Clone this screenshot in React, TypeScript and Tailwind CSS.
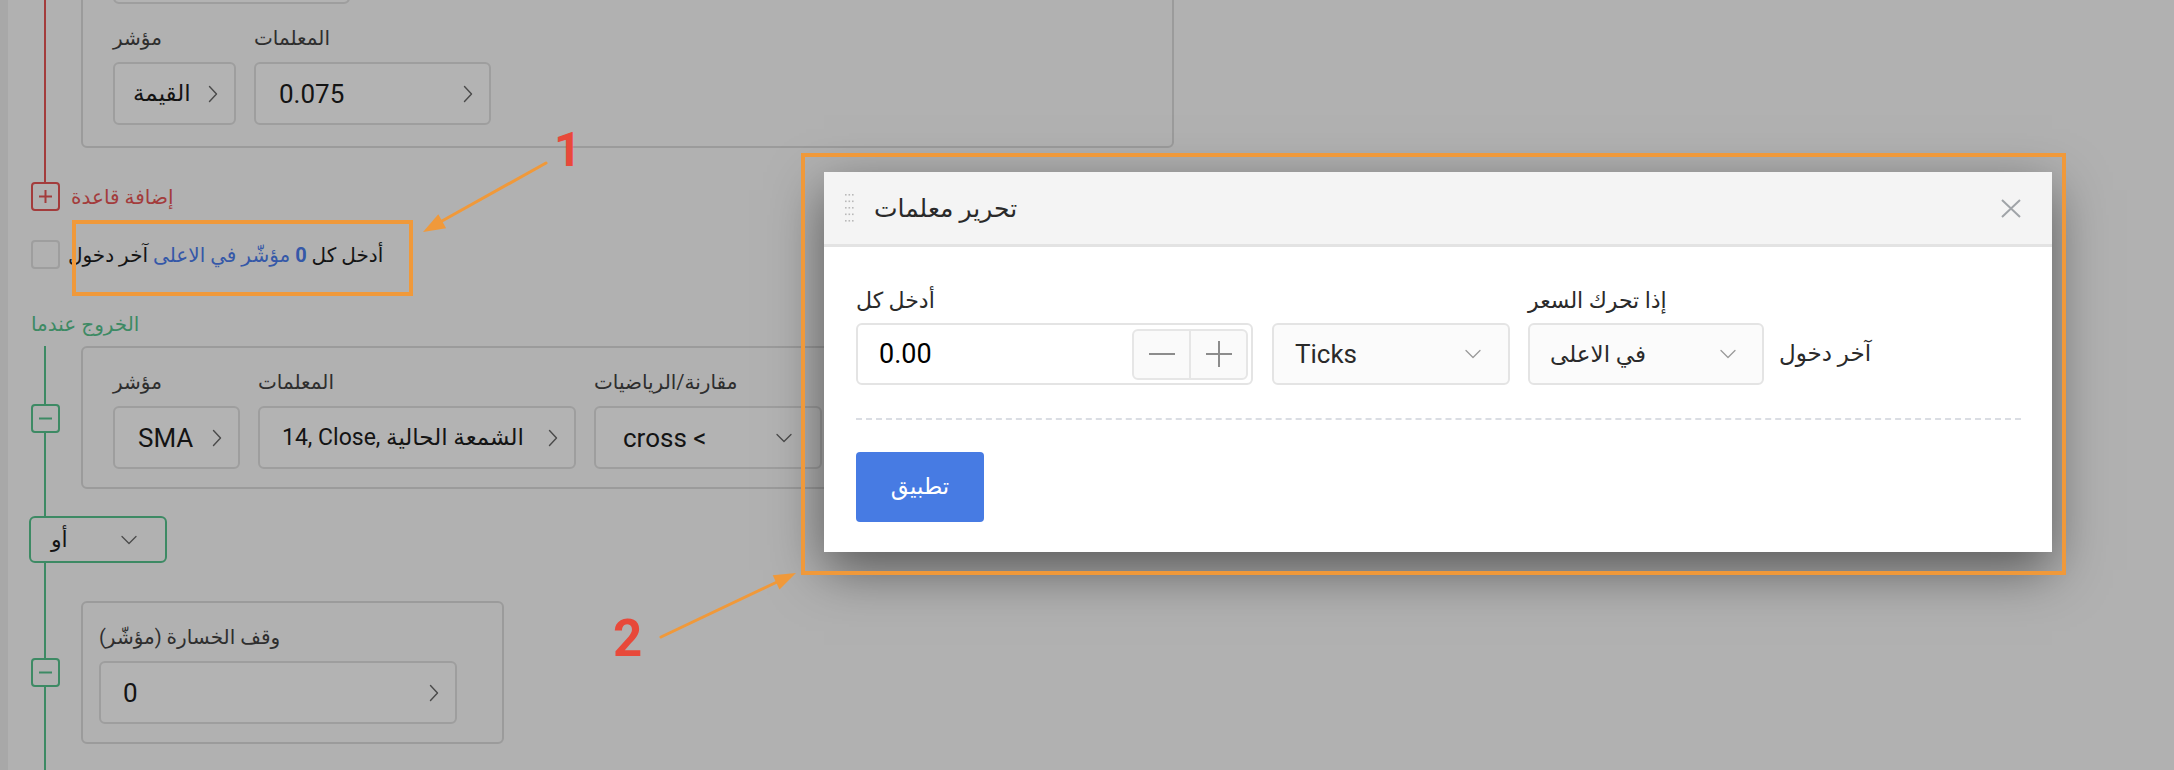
import React from 'react'

function ChevronRight() {
  return (
    <svg className="shrink-0" width="10" height="18" viewBox="0 0 10 18" fill="none" stroke="#4a4a4a" strokeWidth="1.4" strokeLinecap="round" strokeLinejoin="round">
      <path d="M1.5 1.5 L8.5 9 L1.5 16.5" />
    </svg>
  )
}

function ChevronDown({ color = '#9a9a9a' }: { color?: string }) {
  return (
    <svg className="shrink-0" width="16" height="10" viewBox="0 0 16 10" fill="none" stroke={color} strokeWidth="1.3" strokeLinecap="round" strokeLinejoin="round">
      <path d="M1 1.5 L8 8.5 L15 1.5" />
    </svg>
  )
}

function PageInput({ value, width, pl = 'pl-[23px]', size = 'text-[26px]' }: { value: string; width: string; pl?: string; size?: string }) {
  return (
    <div className={`flex h-[63px] items-center justify-between gap-[6px] rounded-[6px] border-2 border-[#9e9e9e] bg-[#b3b3b3] pr-[16px] ${pl} ${width}`}>
      <span className={`leading-none text-[#141414] whitespace-nowrap ${size}`}>{value}</span>
      <ChevronRight />
    </div>
  )
}

function Field({ label, children }: { label: string; children: React.ReactNode }) {
  return (
    <div className="flex flex-col">
      <div className="mb-[10px] h-[28px] text-[20px] leading-[28px] text-[#2e2e2e] whitespace-nowrap">{label}</div>
      {children}
    </div>
  )
}

function RuleBox({ sign, color }: { sign: 'plus' | 'minus'; color: string }) {
  const border = color === 'red' ? 'border-[#a33c3c]' : 'border-[#3d8a64]'
  const stroke = color === 'red' ? '#a33c3c' : '#3d8a64'
  return (
    <div className={`flex h-[29px] w-[29px] shrink-0 items-center justify-center rounded-[4px] border-2 bg-[#b1b1b1] ${border}`}>
      <svg width="15" height="15" viewBox="0 0 15 15" fill="none" stroke={stroke} strokeWidth="2">
        <path d="M1 7.5 H14" />
        {sign === 'plus' && <path d="M7.5 1 V14" />}
      </svg>
    </div>
  )
}

function DragDots() {
  const dots = []
  for (let r = 0; r < 5; r++) {
    for (let c = 0; c < 3; c++) {
      dots.push(<rect key={`${r}-${c}`} x={c * 3.5} y={r * 6.5} width="1.6" height="1.6" fill="#b9b9b9" />)
    }
  }
  return (
    <svg width="9" height="28" viewBox="0 0 9 28">
      {dots}
    </svg>
  )
}

export default function App() {
  return (
    <div className="relative h-[770px] w-[2174px] overflow-hidden bg-[#b1b1b1] font-[Roboto,'DejaVu_Sans',sans-serif] text-[#141414]">
      {/* page behind the overlay */}
      <div className="flex h-full">
        <div className="h-full w-[8px] shrink-0 bg-[#a8a8a8]" />
        <div className="-mt-[83px] flex-1 pl-[23px]">
          {/* entry rules */}
          <div className="ml-[13px] border-l-2 border-[#a33c3c] pb-[34px] pl-[35px]">
            <div className="w-[1093px] rounded-[6px] border-2 border-[#9b9b9b] pb-[21px] pl-[30px] pt-[22px]">
              <div className="h-[63px] w-[237px] rounded-[6px] border-2 border-[#9e9e9e] bg-[#b3b3b3]" />
              <div className="mt-[20px] flex gap-[18px]">
                <Field label="مؤشر">
                  <PageInput value="القيمة" width="w-[123px]" pl="pl-[18px]" size="text-[23px]" />
                </Field>
                <Field label="المعلمات">
                  <PageInput value="0.075" width="w-[237px]" />
                </Field>
              </div>
            </div>
          </div>

          <div className="flex items-center">
            <RuleBox sign="plus" color="red" />
            <span className="ml-[11px] text-[20px] leading-[28px] text-[#a33c3c]">إضافة قاعدة</span>
          </div>

          <div className="mt-[29px] flex items-center">
            <div className="h-[29px] w-[29px] shrink-0 rounded-[4px] border-2 border-[#9e9e9e]" />
            <span dir="rtl" className="ml-[8px] whitespace-nowrap text-[20px] leading-[28px]">
              <span className="text-[#141414]">أدخل كل </span>
              <span className="font-bold text-[#3558a8]">0</span>
              <span className="text-[#3558a8]"> مؤشّر في الاعلى</span>
              <span className="text-[#141414]"> آخر دخول</span>
            </span>
          </div>

          <div className="mt-[41px] text-[20px] leading-[28px] text-[#3d8a64]">الخروج عندما</div>

          {/* exit rules */}
          <div className="ml-[13px] mt-[8px] border-l-2 border-[#3d8a64] pb-[120px]">
            <div className="flex items-start">
              <div className="-ml-[15px] mt-[58px]">
                <RuleBox sign="minus" color="green" />
              </div>
              <div className="ml-[21px] w-[1093px] rounded-[6px] border-2 border-[#9b9b9b] pb-[18px] pl-[30px] pt-[20px]">
                <div className="flex gap-[18px]">
                  <Field label="مؤشر">
                    <PageInput value="SMA" width="w-[127px]" pl="pl-[23px]" />
                  </Field>
                  <Field label="المعلمات">
                    <PageInput value="14, Close, الشمعة الحالية" width="w-[318px]" pl="pl-[22px]" size="text-[23px]" />
                  </Field>
                  <Field label="مقارنة/الرياضيات">
                    <div className="flex h-[63px] w-[228px] items-center justify-between rounded-[6px] border-2 border-[#9e9e9e] bg-[#b3b3b3] pl-[27px] pr-[28px]">
                      <span className="text-[26px] leading-none text-[#141414]">cross &lt;</span>
                      <ChevronDown color="#4a4a4a" />
                    </div>
                  </Field>
                </div>
              </div>
            </div>

            <div className="-ml-[17px] mt-[27px] flex h-[47px] w-[138px] items-center justify-between rounded-[6px] border-2 border-[#3d8a64] bg-[#b1b1b1] pl-[20px] pr-[28px]">
              <span className="text-[22px] leading-none text-[#141414]">أو</span>
              <ChevronDown color="#4a4a4a" />
            </div>

            <div className="mt-[38px] flex items-start">
              <div className="-ml-[15px] mt-[57px]">
                <RuleBox sign="minus" color="green" />
              </div>
              <div className="ml-[21px] w-[423px] rounded-[6px] border-2 border-[#9b9b9b] pb-[18px] pl-[16px] pt-[20px]">
                <Field label="وقف الخسارة (مؤشّر)">
                  <PageInput value="0" width="w-[358px]" pl="pl-[22px]" />
                </Field>
              </div>
            </div>
          </div>
        </div>
      </div>

      {/* modal */}
      <div className="absolute left-[824px] top-[172px] w-[1228px] bg-white shadow-[0_18px_50px_rgba(0,0,0,0.5)]">
        <div className="flex h-[75px] items-center justify-between border-b-[3px] border-[#e3e3e3] bg-[#f4f4f4] pl-[21px] pr-[31px]">
          <div className="flex items-center gap-[20px]">
            <DragDots />
            <span className="text-[25px] leading-none text-[#2a2a2a]">تحرير معلمات</span>
          </div>
          <svg width="20" height="19" viewBox="0 0 20 19" fill="none" stroke="#a0a4a8" strokeWidth="2">
            <path d="M1 1 L19 18 M19 1 L1 18" />
          </svg>
        </div>

        <div className="pb-[30px] pl-[32px] pr-[31px] pt-[40px]">
          <div className="flex items-end">
            <div className="flex flex-col">
              <div className="mb-[8px] h-[28px] text-[22px] leading-[28px] text-[#2a2a2a]">أدخل كل</div>
              <div className="flex h-[62px] w-[397px] items-center justify-between rounded-[6px] border-2 border-[#e4e4e4] bg-white pl-[21px] pr-[3px]">
                <span className="text-[27px] leading-none text-black">0.00</span>
                <div className="flex h-[51px] w-[116px] rounded-[6px] border-2 border-[#e6e6e6] bg-[#fafafa]">
                  <div className="flex flex-1 items-center justify-center">
                    <svg width="26" height="4" viewBox="0 0 26 4" stroke="#8c8c8c" strokeWidth="2">
                      <path d="M0 2 H26" />
                    </svg>
                  </div>
                  <div className="flex flex-1 items-center justify-center border-l-2 border-[#e6e6e6]">
                    <svg width="26" height="26" viewBox="0 0 26 26" stroke="#8c8c8c" strokeWidth="2">
                      <path d="M0 13 H26 M13 0 V26" />
                    </svg>
                  </div>
                </div>
              </div>
            </div>

            <div className="ml-[19px] flex h-[62px] w-[238px] items-center justify-between rounded-[6px] border-2 border-[#e4e4e4] bg-[#fbfbfb] pl-[21px] pr-[27px]">
              <span className="text-[26px] leading-none text-[#2a2a2a]">Ticks</span>
              <ChevronDown />
            </div>

            <div className="ml-[18px] flex flex-col">
              <div className="mb-[8px] h-[28px] whitespace-nowrap text-[22px] leading-[28px] text-[#2a2a2a]">إذا تحرك السعر</div>
              <div className="flex h-[62px] w-[236px] items-center justify-between rounded-[6px] border-2 border-[#e4e4e4] bg-[#fbfbfb] pl-[20px] pr-[26px]">
                <span className="text-[23px] leading-none text-[#2a2a2a]">في الاعلى</span>
                <ChevronDown />
              </div>
            </div>

            <div className="ml-[15px] flex h-[62px] items-center whitespace-nowrap text-[23px] text-[#2a2a2a]">آخر دخول</div>
          </div>

          <div className="mt-[33px] border-t-2 border-dashed border-[#dadde3]" />

          <button className="mt-[32px] flex h-[70px] w-[128px] items-center justify-center rounded-[4px] bg-[#477be3] text-[23px] text-white">
            تطبيق
          </button>
        </div>
      </div>

      {/* annotations */}
      <div className="absolute left-[72px] top-[220px] h-[76px] w-[341px] border-4 border-[#f0993a]" />
      <div className="absolute left-[801px] top-[153px] h-[422px] w-[1265px] border-4 border-[#f0993a]" />

      <svg className="pointer-events-none absolute left-0 top-0" width="2174" height="770" viewBox="0 0 2174 770">
        <line x1="546" y1="163" x2="442" y2="221" stroke="#f0993a" strokeWidth="3" strokeLinecap="round" />
        <polygon points="423,232 446.1,228.2 438.3,214.2" fill="#f0993a" />
        <line x1="661" y1="637" x2="777" y2="582" stroke="#f0993a" strokeWidth="3" strokeLinecap="round" />
        <polygon points="796,573 779.5,589.6 772.7,575.2" fill="#f0993a" />
      </svg>

      <div className="absolute left-[554px] top-[126px] text-[48px] font-bold leading-[48px] text-[#e8493a]">1</div>
      <div className="absolute left-[613px] top-[613px] text-[51px] font-bold leading-[51px] text-[#e8493a]">2</div>
    </div>
  )
}
